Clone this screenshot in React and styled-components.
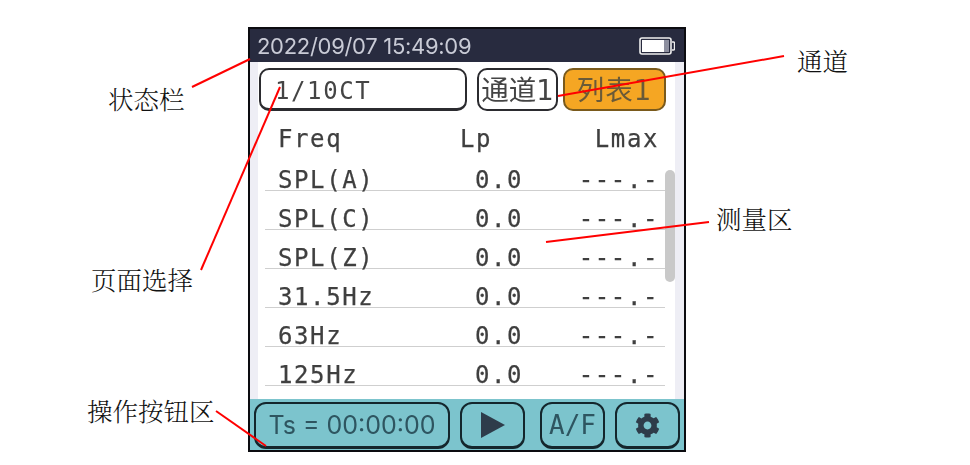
import React from "react";
import styled, { createGlobalStyle } from "styled-components";
import { FaCog } from "react-icons/fa";

const GlobalStyle = createGlobalStyle`
  html, body {
    margin: 0;
    padding: 0;
    background: #fff;
  }
`;

const rows = [
  { name: "SPL(A)", lp: "0.0", lmax: "---.-" },
  { name: "SPL(C)", lp: "0.0", lmax: "---.-" },
  { name: "SPL(Z)", lp: "0.0", lmax: "---.-" },
  { name: "31.5Hz", lp: "0.0", lmax: "---.-" },
  { name: "63Hz", lp: "0.0", lmax: "---.-" },
  { name: "125Hz", lp: "0.0", lmax: "---.-" },
];

function App() {
  return (
    <Canvas>
      <GlobalStyle />
      <Device>
        <StatusBar>
          <span>2022/09/07 15:49:09</span>
          <Battery viewBox="0 0 36 18">
            <rect x="1" y="1" width="31" height="16" rx="2" fill="none" stroke="#eee" strokeWidth="1.6" />
            <rect x="3" y="3" width="22" height="12" fill="#fff" />
            <rect x="25" y="3" width="5" height="12" fill="#8d8f9f" />
            <path d="M33 5h1.5q1 0 1 1v6q0 1 -1 1h-1.5" fill="none" stroke="#eee" strokeWidth="1.4" />
          </Battery>
        </StatusBar>
        <Screen>
          <PageRow>
            <PageSelect>1/10CT</PageSelect>
            <TabButton>通道1</TabButton>
            <TabButton $active>列表1</TabButton>
          </PageRow>
          <Table>
            <HeadRow>
              <span>Freq</span>
              <span>Lp</span>
              <LmaxCell>Lmax</LmaxCell>
            </HeadRow>
            {rows.map((row) => (
              <DataRow key={row.name}>
                <span>{row.name}</span>
                <span>{row.lp}</span>
                <LmaxCell>{row.lmax}</LmaxCell>
              </DataRow>
            ))}
            <ScrollThumb />
          </Table>
        </Screen>
        <Toolbar>
          <TimerButton>Ts = 00:00:00</TimerButton>
          <ToolButton>
            <svg width="26" height="28" viewBox="0 0 26 28">
              <polygon points="1,1 25,14 1,27" fill="#2e3c4a" />
            </svg>
          </ToolButton>
          <ModeButton>A/F</ModeButton>
          <ToolButton>
            <FaCog size={25} />
          </ToolButton>
        </Toolbar>
      </Device>

      <Callouts viewBox="0 0 970 465">
        <line x1="192" y1="87" x2="250" y2="59" />
        <line x1="558" y1="96" x2="784" y2="56" />
        <line x1="280" y1="87" x2="201" y2="270" />
        <line x1="546" y1="242" x2="709" y2="222" />
        <line x1="216" y1="411" x2="266" y2="446" />
      </Callouts>

      <Label $x={108} $y={83}>状态栏</Label>
      <Label $x={797} $y={45}>通道</Label>
      <Label $x={91} $y={264}>页面选择</Label>
      <Label $x={716} $y={203}>测量区</Label>
      <Label $x={87} $y={395}>操作按钮区</Label>
    </Canvas>
  );
}

const Canvas = styled.div`
  position: relative;
  width: 970px;
  height: 465px;
  padding: 27px 0 0 248px;
  box-sizing: border-box;
  overflow: hidden;
`;

const Device = styled.div`
  width: 438px;
  height: 425px;
  box-sizing: border-box;
  border: 2px solid #0c0c10;
  display: flex;
  flex-direction: column;
  filter: blur(0.35px);
`;

const StatusBar = styled.div`
  height: 33px;
  flex: none;
  background: #282b3f;
  color: #c9cbd6;
  display: flex;
  align-items: center;
  justify-content: space-between;
  padding: 0 9px 0 7px;
  font-family: "Inter", "Liberation Sans", sans-serif;
  font-size: 22px;
  letter-spacing: -0.3px;
`;

const Battery = styled.svg`
  width: 36px;
  height: 18px;
`;

const Screen = styled.div`
  flex: 1;
  background: #eeeef5;
  padding: 0 9px 0 8px;
  display: flex;
  flex-direction: column;
  min-height: 0;
`;

const PageRow = styled.div`
  display: flex;
  flex: none;
  height: 56px;
  box-sizing: border-box;
  padding: 6px 0 7px 1px;
  gap: 10px;
  background: #fff;
`;

const PageSelect = styled.div`
  width: 208px;
  box-sizing: border-box;
  border: 2px solid #2b2b2f;
  border-bottom-width: 3px;
  border-radius: 10px;
  background: #fff;
  color: #444;
  font-family: "DejaVu Sans Mono", monospace;
  font-size: 24px;
  letter-spacing: 1.6px;
  line-height: 43px;
  padding-left: 14px;
`;

const TabButton = styled.div`
  width: ${(p) => (p.$active ? "103px" : "81px")};
  margin-left: ${(p) => (p.$active ? "-5px" : "0")};
  box-sizing: border-box;
  border: 2px solid ${(p) => (p.$active ? "#7a5a1c" : "#2b2b2f")};
  border-radius: 10px;
  background: ${(p) => (p.$active ? "#f5a623" : "#fff")};
  color: ${(p) => (p.$active ? "#6a5a38" : "#444")};
  font-family: "DejaVu Sans", "Noto Sans CJK SC", sans-serif;
  font-size: 27.5px;
  line-height: 40px;
  letter-spacing: ${(p) => (p.$active ? "1px" : "0")};
  text-align: center;
  white-space: nowrap;
`;

const Table = styled.div`
  position: relative;
  flex: 1;
  background: #fff;
  padding: 0 10px 0 7px;
  font-family: "DejaVu Sans Mono", monospace;
  font-size: 24px;
  letter-spacing: 1.6px;
  color: #3f3f3f;
  -webkit-text-stroke: 0.25px #3f3f3f;
`;

const HeadRow = styled.div`
  display: grid;
  grid-template-columns: 182px 1fr auto;
  height: 34px;
  box-sizing: border-box;
  padding: 7px 6px 0 13px;
  align-items: center;
`;

const DataRow = styled(HeadRow)`
  grid-template-columns: 197px 1fr auto;
  height: 39px;
  padding: 0 6px 0 13px;
  border-bottom: 1px solid #cfcfcf;
  align-items: end;
  line-height: 20px;
`;

const LmaxCell = styled.span`
  text-align: right;
`;

const ScrollThumb = styled.div`
  position: absolute;
  right: 0;
  top: 52px;
  width: 10px;
  height: 112px;
  border-radius: 5px;
  background: #c9c9c9;
`;

const Toolbar = styled.div`
  height: 51px;
  flex: none;
  box-sizing: border-box;
  background: #7cc4cd;
  display: flex;
  padding: 3px 0 0 4px;
`;

const ToolButton = styled.div`
  flex: none;
  width: 65px;
  height: 47px;
  margin-left: 10px;
  box-sizing: border-box;
  border: 2px solid #14262c;
  border-bottom-width: 3px;
  border-radius: 12px;
  display: flex;
  align-items: center;
  justify-content: center;
  color: #2e3c4a;
`;

const TimerButton = styled(ToolButton)`
  width: 196px;
  margin-left: 0;
  font-family: "Inter", "Liberation Sans", sans-serif;
  font-size: 25px;
  color: #2e5560;
`;

const ModeButton = styled(ToolButton)`
  margin-left: 15px;
  font-family: "DejaVu Sans Mono", monospace;
  font-size: 26px;
  color: #2e5560;
`;

const Callouts = styled.svg`
  position: absolute;
  left: 0;
  top: 0;
  width: 970px;
  height: 465px;
  pointer-events: none;
  line {
    stroke: #f00;
    stroke-width: 2;
  }
`;

const Label = styled.div`
  position: absolute;
  left: ${(p) => p.$x}px;
  top: ${(p) => p.$y}px;
  font-family: "Noto Serif CJK SC", "Noto Sans CJK SC", serif;
  font-size: 25.5px;
  line-height: 30px;
  font-weight: 300;
  color: #111;
  white-space: nowrap;
`;

export default App;
